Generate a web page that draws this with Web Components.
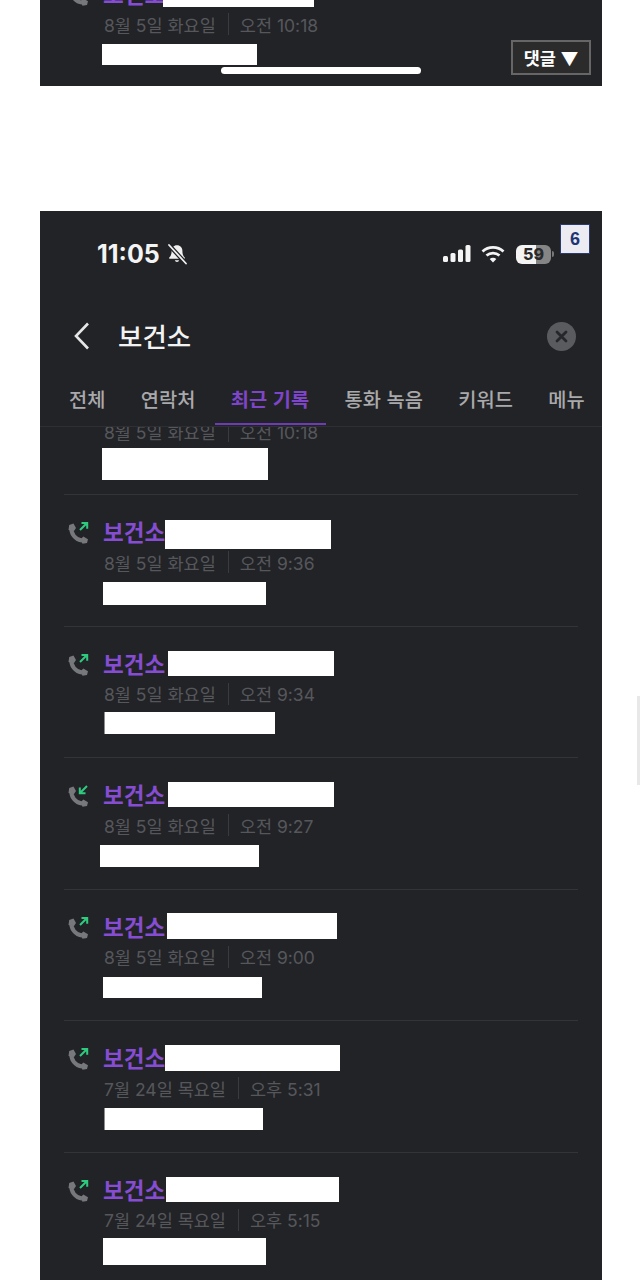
<!DOCTYPE html>
<html lang="ko">
<head>
<meta charset="utf-8">
<title>보건소</title>
<style>
html, body { margin: 0; padding: 0; background: #fff; }
body { width: 640px; height: 1280px; overflow: hidden; position: relative; font-family: "Noto Sans CJK KR", "Noto Sans", sans-serif; }
</style>
</head>
<body>
<shot-page>
    <phone-card style="--card-height: 86px; --card-justify: flex-end;">
        <call-row dir="out" style="--row-height: 129.6px; --name-x: -2px; --name-w: 151px; --name-t: 3px; --note-x: -1px; --note-w: 155px; --note-t: 0px; --note-h: 21px;">
            <span slot="date">8월 5일 화요일</span><span slot="time">오전 10:18</span>
        </call-row>
        <home-bar></home-bar>
        <reply-button>댓글 ▼</reply-button>
    </phone-card>

    <phone-card style="--card-height: 1069px; --card-justify: flex-start;">
        <status-bar time="11:05" battery="59"></status-bar>
        <search-head title="보건소"></search-head>
        <tab-bar>
            <span>전체</span><span>연락처</span><span class="on">최근 기록</span><span>통화 녹음</span><span>키워드</span><span>메뉴</span>
        </tab-bar>
        <call-list>
            <call-row dir="out" style="margin-top: -64px; --row-height: 131px; --note-x: -1px; --note-w: 166px; --note-t: -3px; --note-h: 32px;">
                <span slot="date">8월 5일 화요일</span><span slot="time">오전 10:18</span>
            </call-row>
            <call-row dir="out" style="--name-x: 0px; --name-w: 166px; --name-t: 3px; --name-h: 29px; --note-w: 163px;">
                <span slot="date">8월 5일 화요일</span><span slot="time">오전 9:36</span>
            </call-row>
            <call-row dir="out" style="--name-x: 3px; --name-w: 166px; --note-x: 2px; --note-w: 170px; --note-h: 22px; --note-t: -2px; --note-edge: #8d8d8d;">
                <span slot="date">8월 5일 화요일</span><span slot="time">오전 9:34</span>
            </call-row>
            <call-row dir="in" style="--name-x: 3px; --name-w: 166px; --note-x: -3px; --note-w: 159px; --note-h: 22px;">
                <span slot="date">8월 5일 화요일</span><span slot="time">오전 9:27</span>
            </call-row>
            <call-row dir="out" style="--name-x: 2px; --name-w: 170px; --name-t: 1px; --name-h: 26px; --note-w: 159px; --note-h: 21px;">
                <span slot="date">8월 5일 화요일</span><span slot="time">오전 9:00</span>
            </call-row>
            <call-row dir="out" style="--name-x: 0px; --name-w: 175px; --name-h: 26px; --note-x: 2px; --note-w: 158px; --note-h: 22px; --note-edge: #8d8d8d;">
                <span slot="date">7월 24일 목요일</span><span slot="time">오후 5:31</span>
            </call-row>
            <call-row dir="out" style="--name-x: 1px; --name-w: 173px; --note-w: 163px; --note-h: 27px; --note-t: -2px;">
                <span slot="date">7월 24일 목요일</span><span slot="time">오후 5:15</span>
            </call-row>
        </call-list>
        <page-badge>6</page-badge>
    </phone-card>
</shot-page>
<edge-mark></edge-mark>

<script>
const FONT = `"Noto Sans CJK KR", "Noto Sans", sans-serif`

class ShadowEl extends HTMLElement {
    constructor(html) {
        super()
        this.attachShadow({ mode: "open" }).innerHTML = html
    }
}

customElements.define('shot-page', class extends ShadowEl {
    constructor() {
        super(/*html*/`
        <style>
        :host { display: flex; flex-direction: column; gap: 125px; padding: 0 38px 0 40px; font-family: ${FONT}; }
        </style>
        <slot></slot>`)
    }
})

customElements.define('phone-card', class extends ShadowEl {
    constructor() {
        super(/*html*/`
        <style>
        :host {
            display: flex;
            flex-direction: column;
            justify-content: var(--card-justify, flex-start);
            position: relative;
            height: var(--card-height);
            width: 562px;
            box-sizing: border-box;
            background: #222327;
            overflow: hidden;
        }
        </style>
        <slot></slot>`)
    }
})

customElements.define('status-bar', class extends ShadowEl {
    constructor() {
        super(/*html*/`
        <style>
        :host { display: flex; align-items: center; height: 85px; padding: 1px 48px 0 57px; box-sizing: border-box; flex: none; }
        .time { font: 700 25px Inter, "Liberation Sans", sans-serif; color: #f4f4f4; }
        .left { display: flex; align-items: center; gap: 6px; flex: 1; }
        .right { display: flex; align-items: center; gap: 10px; }
        .battery { width: 35px; height: 19px; border-radius: 6px; overflow: hidden; background: linear-gradient(90deg, #f4f4f4 0 58%, #858585 58%); display: flex; align-items: center; justify-content: center; font: 800 16px Inter, "Liberation Sans", sans-serif; color: #2a2a2c; }
        .wrap { display: flex; align-items: center; gap: 1px; margin-left: 1px; }
        .tip { width: 2px; height: 6px; background: #777; border-radius: 0 2px 2px 0; }
        svg { display: block; }
        </style>
        <div class="left">
            <span class="time"></span>
            <svg width="22" height="24" viewBox="0 0 22 22">
                <path d="M11 2.200c-3.400 0-5.400 2.500-5.400 5.600 0 3.600-.8 5.300-2.300 6.700-.5.500-.2 1.300.5 1.300h14.400c.7 0 1-.8.5-1.300-1.500-1.400-2.300-3.100-2.300-6.700 0-3.100-2-5.600-5.400-5.600z" fill="#f0f0f0"/>
                <path d="M8.800 17.300a2.300 2.300 0 0 0 4.400 0z" fill="#f0f0f0"/>
                <path d="M2.500 1.500 19.500 20" stroke="#222327" stroke-width="4.200"/>
                <path d="M3 2 20 20.500" stroke="#f0f0f0" stroke-width="1.800" stroke-linecap="round"/>
            </svg>
        </div>
        <div class="right">
            <svg width="28" height="18" viewBox="0 0 28 18" fill="#f4f4f4">
                <rect x="0" y="11" width="5" height="6" rx="1.500"/>
                <rect x="7.500" y="8" width="5" height="9" rx="1.500"/>
                <rect x="15" y="4.500" width="5" height="12.500" rx="1.500"/>
                <rect x="22.500" y="0" width="5" height="17" rx="1.500"/>
            </svg>
            <svg width="24" height="18" viewBox="0 0 24 18" fill="none" stroke="#f4f4f4" stroke-width="2.800">
                <path d="M1.500 6.500C7.500 1 16.500 1 22.500 6.500"/>
                <path d="M5.500 10.500c3.800-3.300 9.200-3.300 13 0"/>
                <path d="M12 17.500 8.700 13.900c1.900-1.500 4.700-1.500 6.600 0z" fill="#f4f4f4" stroke="none"/>
            </svg>
            <span class="wrap"><span class="battery"></span><span class="tip"></span></span>
        </div>`)
        this.shadowRoot.querySelector('.time').textContent = this.getAttribute('time')
        this.shadowRoot.querySelector('.battery').textContent = this.getAttribute('battery')
    }
})

customElements.define('search-head', class extends ShadowEl {
    constructor() {
        super(/*html*/`
        <style>
        :host { display: flex; align-items: center; height: 80px; padding: 0 26px 0 34px; box-sizing: border-box; flex: none; }
        .title { flex: 1; margin-left: 28px; font-size: 26.500px; font-weight: 500; color: #f2f2f2; line-height: 1; }
        svg { display: block; }
        </style>
        <svg width="16" height="28" viewBox="0 0 16 28" fill="none" stroke="#e6e6e6" stroke-width="2.600"><path d="M14 1.500 2 14l12 12.500"/></svg>
        <span class="title"></span>
        <svg width="29" height="29" viewBox="0 0 29 29">
            <circle cx="14.500" cy="14.500" r="14.500" fill="#5a5b5f"/>
            <path d="M10 10l9 9M19 10l-9 9" stroke="#26272a" stroke-width="2.800" stroke-linecap="round"/>
        </svg>`)
        this.shadowRoot.querySelector('.title').textContent = this.getAttribute('title')
    }
})

customElements.define('tab-bar', class extends ShadowEl {
    constructor() {
        super(/*html*/`
        <style>
        :host {
            display: flex;
            gap: 35.400px;
            height: 51px;
            box-sizing: border-box;
            padding: 8px 0 0 29px;
            border-bottom: 1px solid #2e2f33;
            flex: none;
            white-space: nowrap;
            position: relative;
        }
        ::slotted(span) {
            position: relative;
            font-size: 19.800px;
            line-height: 30px;
            font-weight: 500;
            color: #a9a9ab;
            height: 30px;
        }
        ::slotted(span.on) { color: #7f45c9; font-weight: 700; }
        ::slotted(span.on)::after {
            content: "";
            position: absolute;
            left: -16px;
            right: -17px;
            top: 39px;
            height: 2px;
            background: #6d3cb4;
        }
        </style>
        <slot></slot>`)
    }
})

customElements.define('call-list', class extends ShadowEl {
    constructor() {
        super(/*html*/`
        <style>
        :host { display: block; overflow: hidden; flex: 1; min-height: 0; }
        </style>
        <slot></slot>`)
    }
})

customElements.define('call-row', class extends ShadowEl {
    constructor() {
        super(/*html*/`
        <style>
        :host {
            display: block;
            height: var(--row-height, 131.600px);
            margin: 0 24px;
            box-sizing: border-box;
            border-top: 1px solid #33343a;
            position: relative;
            flex: none;
        }
        .row { display: grid; grid-template-columns: 36px 1fr; padding: 22px 0 0 3px; }
        .icon { display: block; margin-top: 5px; }
        .name { display: flex; height: 30px; font-size: 22.500px; font-weight: 700; color: #864dd2; line-height: 28px; }
        .name i {
            display: block;
            background: #fff;
            margin-left: var(--name-x, 0);
            margin-top: var(--name-t, 2px);
            width: var(--name-w, 0);
            height: var(--name-h, 25px);
        }
        .date { display: flex; align-items: center; height: 30px; padding-left: 1px; font: 17.500px Inter, "Noto Sans CJK KR", sans-serif; color: #56575b; white-space: nowrap; }
        .date i { display: block; width: 1px; height: 22px; margin: 0 11px 0 12px; background: #3a3b3f; }
        .note {
            display: block;
            background: #fff;
            box-shadow: -1px 0 0 var(--note-edge, transparent);
            margin-left: var(--note-x, 0);
            margin-top: calc(5px + var(--note-t, 0px));
            width: var(--note-w, 160px);
            height: var(--note-h, 23px);
        }
        </style>
        <div class="row">
            <svg class="icon" width="23" height="23" viewBox="0 0 23 23" fill="none">
                <path d="M4.500 5.500C3.500 11.500 8.500 18 15 18.500" stroke="#77787b" stroke-width="4"/>
                <path d="M1.500 8 2.200 3 6.500 1.500l2.500 4.500-2 3zM13.500 17.500l2.800-3 4.700 2.700-1 3.800-4.500.8z" fill="#77787b"/>
                <g class="arrow" stroke="#2ecb7f" stroke-width="2"></g>
            </svg>
            <div>
                <div class="name"><slot name="name">보건소</slot><i></i></div>
                <div class="date"><slot name="date"></slot><i></i><slot name="time"></slot></div>
                <div class="note"></div>
            </div>
        </div>`)
        // 발신 / 수신 화살표
        this.shadowRoot.querySelector('.arrow').innerHTML = this.getAttribute('dir') == 'in'
            ? '<path d="M20 1 13 8M12.800 2.500V8.200H18.500"/>'
            : '<path d="M13 8 20 1M14.500 1H20.200V6.700"/>'
    }
})

customElements.define('home-bar', class extends ShadowEl {
    constructor() {
        super(/*html*/`
        <style>
        :host { position: absolute; left: 181px; top: 67px; width: 200px; height: 7px; border-radius: 4px; background: #fff; }
        </style>`)
    }
})

customElements.define('reply-button', class extends ShadowEl {
    constructor() {
        super(/*html*/`
        <style>
        :host {
            position: absolute;
            left: 471px;
            top: 40px;
            width: 80px;
            height: 35px;
            box-sizing: border-box;
            display: flex;
            align-items: center;
            justify-content: center;
            background: #2b2b2b;
            border: 2px solid #666;
            color: #fff;
            font-size: 17.500px;
            font-weight: 700;
            white-space: nowrap;
        }
        </style>
        <slot></slot>`)
    }
})

customElements.define('page-badge', class extends ShadowEl {
    constructor() {
        super(/*html*/`
        <style>
        :host {
            position: absolute;
            left: 520px;
            top: 13px;
            width: 30px;
            height: 30px;
            box-sizing: border-box;
            display: flex;
            align-items: center;
            justify-content: center;
            background: #ecebf1;
            border: 1px solid #2a3a70;
            color: #1f3474;
            font: 700 18px "Liberation Sans", sans-serif;
        }
        </style>
        <slot></slot>`)
    }
})

customElements.define('edge-mark', class extends ShadowEl {
    constructor() {
        super(/*html*/`
        <style>
        :host { position: absolute; right: 0; top: 696px; width: 3px; height: 89px; background: #e8e8e8; }
        </style>`)
    }
})
</script>
</body>
</html>
